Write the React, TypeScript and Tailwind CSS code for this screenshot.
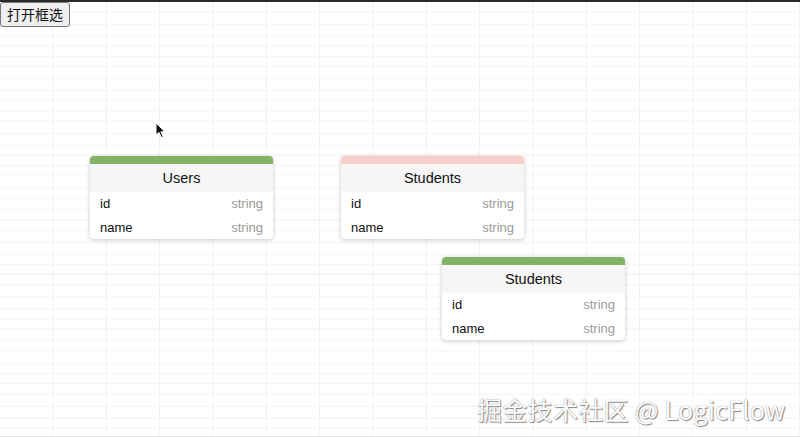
import React from 'react';

interface Field {
  name: string;
  type: string;
}

interface TableNodeProps {
  title: string;
  fields: Field[];
  headerClass: string;
  posClass: string;
}

const fields: Field[] = [
  { name: 'id', type: 'string' },
  { name: 'name', type: 'string' },
];

const TableNode: React.FC<TableNodeProps> = ({ title, fields, headerClass, posClass }) => (
  <div
    className={`absolute w-[183px] rounded-[4px] bg-white shadow-[0_1px_4px_rgba(0,0,0,0.22)] overflow-hidden ${posClass}`}
  >
    <div className={`h-[8px] ${headerClass}`} />
    <div className="h-[28px] pt-[1px] flex items-center justify-center bg-[#f6f6f6] text-[14.5px] text-[#111]">
      {title}
    </div>
    {fields.map((f) => (
      <div key={f.name} className="h-[23.5px] flex items-center justify-between px-[10px] text-[13px]">
        <span className="text-[#111]">{f.name}</span>
        <span className="text-[#9a9a9a]">{f.type}</span>
      </div>
    ))}
  </div>
);

export default function App() {
  return (
    <div
      className="relative w-[800px] h-[437px] overflow-hidden bg-white border-t-2 border-b border-t-[#2a2a2a] border-b-[#e2e2e2]"
      style={{ fontFamily: '"Liberation Sans", "Noto Sans CJK SC", sans-serif' }}
    >
      {/* grid background */}
      <svg className="absolute inset-0" width="800" height="437">
        <defs>
          <pattern id="grid" width="53.333" height="54.6" patternUnits="userSpaceOnUse">
            <path d="M53.333 0 V54.6 M0 54.6 H53.333" stroke="#e6e6e6" strokeWidth="1.2" fill="none" />
            <path d="M0 10 H53.333 M0 22 H53.333 M0 34 H53.333 M0 44 H53.333" stroke="#f3f3f3" strokeWidth="1" fill="none" />
          </pattern>
        </defs>
        <rect width="800" height="437" fill="url(#grid)" />
      </svg>

      <button className="absolute left-0 top-0 h-[25px] px-[6px] bg-[#efefef] border border-[#777] rounded-[3px] text-[14px] text-[#111] leading-none">
        打开框选
      </button>

      {/* mouse cursor */}
      <svg className="absolute left-[155px] top-[120px]" width="12" height="17" viewBox="0 0 12 17">
        <path d="M1 1 L1 13 L4 10.5 L6.5 15.5 L8.3 14.7 L5.9 9.8 L10 9.8 Z" fill="#111" stroke="#fff" strokeWidth="1" />
      </svg>

      <TableNode title="Users" fields={fields} headerClass="bg-[#82b366]" posClass="left-[90px] top-[154px]" />
      <TableNode title="Students" fields={fields} headerClass="bg-[#f8cecc]" posClass="left-[341px] top-[154px]" />
      <TableNode title="Students" fields={fields} headerClass="bg-[#82b366]" posClass="left-[442px] top-[255px]" />

      <div
        className="absolute left-[477px] top-[389px] text-[25px] tracking-[0.3px] text-white [text-shadow:0_0_1px_#777,1px_1px_1px_#888]"
        style={{ fontFamily: '"Noto Sans CJK SC", "Noto Sans", sans-serif' }}
      >
        掘金技术社区 @ LogicFlow
      </div>
    </div>
  );
}
